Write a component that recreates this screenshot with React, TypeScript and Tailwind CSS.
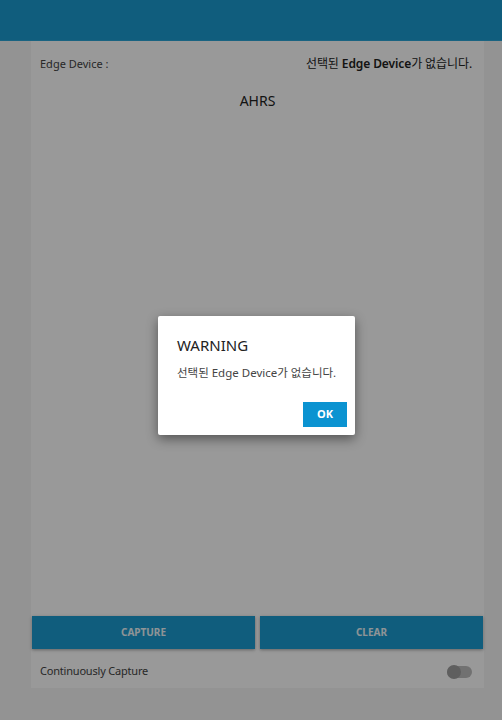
import { useState } from "react";

export default function App() {
  const [continuous, setContinuous] = useState(false);
  const font = { fontFamily: '"Noto Sans", "Noto Sans CJK KR", sans-serif' };

  return (
    <div className="relative w-[502px] h-[720px] bg-[#f5f5f5] overflow-hidden text-[#333]" style={font}>
      {/* Header */}
      <header className="h-[41px] bg-[#1c9bd0] border-b border-[#2aa6d8]" />

      {/* Main card */}
      <div className="pl-[31px] pr-[18px]">
        <div className="h-[647px] bg-white flex flex-col">
          <div className="flex items-center justify-between pl-[9px] pr-[12px] pt-[14px] text-[12px]">
            <span className="text-[#444] text-[11px]">Edge Device :</span>
            <span className="text-[#222] tracking-[-0.1px]">
              선택된 <b className="font-semibold">Edge Device</b>가 없습니다.
            </span>
          </div>
          <div className="text-center text-[14px] mt-[17px] text-[#222]">AHRS</div>

          <div className="flex-1" />

          <div className="flex gap-[5px] px-[1px]">
            <button className="flex-1 h-[33px] bg-[#1c9bd0] text-[#eef7fb] text-[10px] font-bold shadow-[0_1px_3px_rgba(0,0,0,0.35)]">
              CAPTURE
            </button>
            <button className="flex-1 h-[33px] bg-[#1c9bd0] text-[#eef7fb] text-[10px] font-bold shadow-[0_1px_3px_rgba(0,0,0,0.35)]">
              CLEAR
            </button>
          </div>

          <div className="flex items-center justify-between pl-[9px] pr-[12px] pt-[6px] h-[39px]">
            <span className="text-[#444] text-[11px] tracking-[-0.2px]">Continuously Capture</span>
            <button
              onClick={() => setContinuous(!continuous)}
              className="relative w-[25px] h-[12px] rounded-full bg-[#bdbdbd]"
            >
              <span className="absolute left-0 top-[-1px] w-[14px] h-[14px] rounded-full bg-[#9e9e9e]" />
            </button>
          </div>
        </div>
      </div>

      {/* Overlay */}
      <div className="absolute inset-0 bg-black/40" />

      {/* Dialog */}
      <div className="absolute left-[158px] top-[316px] w-[197px] h-[119px] bg-white rounded-[2px] shadow-[0_4px_12px_rgba(0,0,0,0.45)] flex flex-col">
        <div className="px-[19px] pt-[19px] text-[15px] text-[#222] leading-[20px]">WARNING</div>
        <div className="pl-[19px] pt-[10px] text-[11.5px] text-[#444] leading-[16px] whitespace-nowrap">
          선택된 Edge Device가 없습니다.
        </div>
        <div className="flex-1" />
        <div className="flex justify-end px-[8px] pb-[8px]">
          <button className="w-[44px] h-[25px] bg-[#0b93d1] text-white text-[11px] font-bold">OK</button>
        </div>
      </div>
    </div>
  );
}
